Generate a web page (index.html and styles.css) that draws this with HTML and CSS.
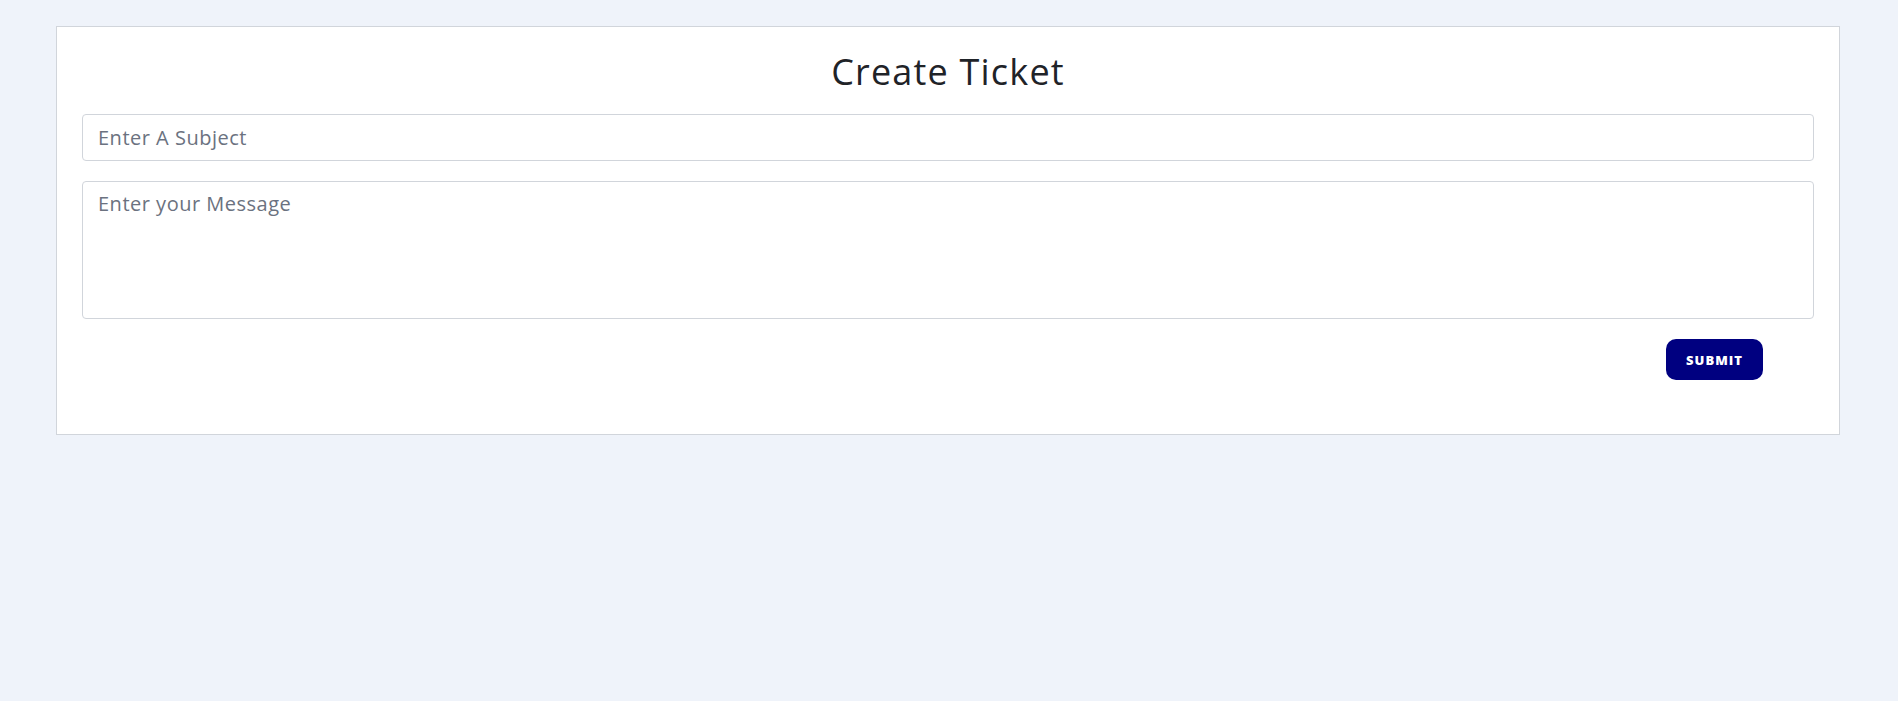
FILE: index.html
```html
<!DOCTYPE html>
<html lang="en">
<head>
<meta charset="utf-8">
<title>Create Ticket</title>
<link rel="stylesheet" href="styles.css">
</head>
<body>
<div class="page">
  <form class="card">
    <h1 class="title">Create Ticket</h1>
    <input class="field" type="text" placeholder="Enter A Subject">
    <textarea class="field area" placeholder="Enter your Message"></textarea>
    <div class="actions">
      <button class="submit" type="button">SUBMIT</button>
    </div>
  </form>
</div>
</body>
</html>
```

FILE: styles.css
```css
* { box-sizing: border-box; }
html, body {
  margin: 0;
  padding: 0;
  background: #eff3fa;
  font-family: "Open Sans", "Liberation Sans", sans-serif;
}
.page {
  padding: 26px 58px 0 56px;
}
.card {
  background: #ffffff;
  border: 1px solid #d1d5db;
  padding: 18px 25px 54px 25px;
  display: flex;
  flex-direction: column;
}
.title {
  margin: 0 0 15px 0;
  text-align: center;
  font-size: 36px;
  line-height: 54px;
  font-weight: 400;
  letter-spacing: 1.2px;
  color: #1f2328;
}
.field {
  display: block;
  width: 100%;
  border: 1px solid #d1d5db;
  border-radius: 4px;
  font-family: inherit;
  font-size: 20px;
  letter-spacing: 0.5px;
  color: #374151;
  padding: 0 15px;
  outline: none;
  background: #fff;
}
input.field {
  height: 47px;
}
.field::placeholder {
  color: #6b7280;
  opacity: 1;
}
.area {
  margin-top: 20px;
  height: 138px;
  padding-top: 7px;
  resize: none;
  line-height: 30px;
}
.actions {
  margin-top: 20px;
  display: flex;
  justify-content: flex-end;
  padding-right: 51px;
}
.submit {
  width: 97px;
  height: 41px;
  border: none;
  border-radius: 10px;
  background: #000080;
  color: #fff;
  font-family: "Open Sans", "Liberation Sans", sans-serif;
  font-weight: 800;
  font-size: 13px;
  letter-spacing: 1px;
  cursor: pointer;
}
```
